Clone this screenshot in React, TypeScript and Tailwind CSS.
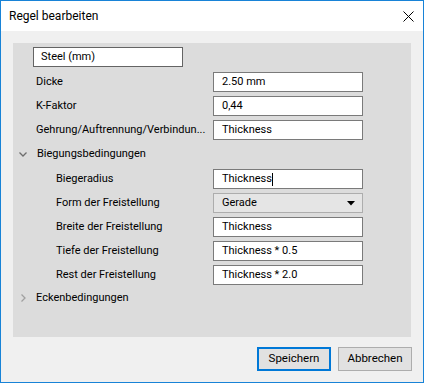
const font = { fontFamily: "Roboto, 'Liberation Sans', sans-serif" }

function TextBox({ value, caret }: { value: string; caret?: boolean }) {
  return (
    <div className="w-[150px] h-[20px] flex items-center bg-white border border-[#7a7a7a] pl-[8px] text-[11px] text-black">
      <span>{value}</span>
      {caret && <span className="w-px h-[13px] bg-black" />}
    </div>
  )
}

function Dropdown({ value }: { value: string }) {
  return (
    <div className="w-[150px] h-[20px] flex items-center justify-between bg-[#e5e5e5] border border-[#adadad] pl-[8px] pr-[7px] text-[11px] text-black">
      <span>{value}</span>
      <svg width="8" height="5" viewBox="0 0 8 5">
        <path d="M0 0 H8 L4 4.5 Z" fill="#000" />
      </svg>
    </div>
  )
}

function Row({ label, indent, children }: { label: string; indent?: boolean; children: React.ReactNode }) {
  return (
    <div className={"flex items-center h-[20px] " + (indent ? "pl-[43px]" : "pl-[23px]")}>
      <div className={(indent ? "w-[157px]" : "w-[177px]") + " text-[11px] text-black whitespace-nowrap"}>{label}</div>
      {children}
    </div>
  )
}

export default function App() {
  return (
    <div style={font} className="w-[424px] h-[383px] flex flex-col bg-[#f0f0f0] border border-[#1883d7]">
      <div className="h-[30px] bg-white flex items-center justify-between pl-[8px] pr-[9px]">
        <span className="text-[12px] text-black">Regel bearbeiten</span>
        <svg width="11" height="11" viewBox="0 0 11 11">
          <path d="M0.5 0.5 L10.5 10.5 M10.5 0.5 L0.5 10.5" stroke="#000" strokeWidth="1" />
        </svg>
      </div>

      <div className="mx-[12px] mt-[12px] h-[294px] bg-[#dcdcdc] flex flex-col gap-[4px] pt-[4px]">
        <div className="ml-[20px] w-[150px] h-[20px] mb-[1px] flex items-center bg-white border border-[#646464] pl-[7px] text-[11px] text-black">
          Steel (mm)
        </div>
        <Row label="Dicke">
          <TextBox value="2.50 mm" />
        </Row>
        <Row label="K-Faktor">
          <TextBox value="0,44" />
        </Row>
        <Row label="Gehrung/Auftrennung/Verbindun...">
          <TextBox value="Thickness" />
        </Row>
        <div className="flex items-center h-[21px] pl-[6px] text-[11px] text-black">
          <svg width="8" height="5" viewBox="0 0 8 5" className="mr-[10px]">
            <path d="M0.5 0.5 L4 4 L7.5 0.5" stroke="#6d6d6d" strokeWidth="1.3" fill="none" />
          </svg>
          <span>Biegungsbedingungen</span>
        </div>
        <Row label="Biegeradius" indent>
          <TextBox value="Thickness" caret />
        </Row>
        <Row label="Form der Freistellung" indent>
          <Dropdown value="Gerade" />
        </Row>
        <Row label="Breite der Freistellung" indent>
          <TextBox value="Thickness" />
        </Row>
        <Row label="Tiefe der Freistellung" indent>
          <TextBox value="Thickness * 0.5" />
        </Row>
        <Row label="Rest der Freistellung" indent>
          <TextBox value="Thickness * 2.0" />
        </Row>
        <div className="flex items-center h-[18px] pl-[8px] text-[11px] text-black">
          <svg width="5" height="8" viewBox="0 0 5 8" className="mr-[10px]">
            <path d="M0.5 0.5 L4 4 L0.5 7.5" stroke="#a0a0a0" strokeWidth="1.3" fill="none" />
          </svg>
          <span>Eckenbedingungen</span>
        </div>
      </div>

      <div className="flex justify-end gap-[7px] mt-[10px] pr-[11px]">
        <button className="w-[74px] h-[24px] bg-[#e1e1e1] border-2 border-[#0078d7] text-[11.5px] text-black">
          Speichern
        </button>
        <button className="w-[74px] h-[24px] bg-[#e1e1e1] border border-[#adadad] text-[11.5px] text-black">
          Abbrechen
        </button>
      </div>
    </div>
  )
}
